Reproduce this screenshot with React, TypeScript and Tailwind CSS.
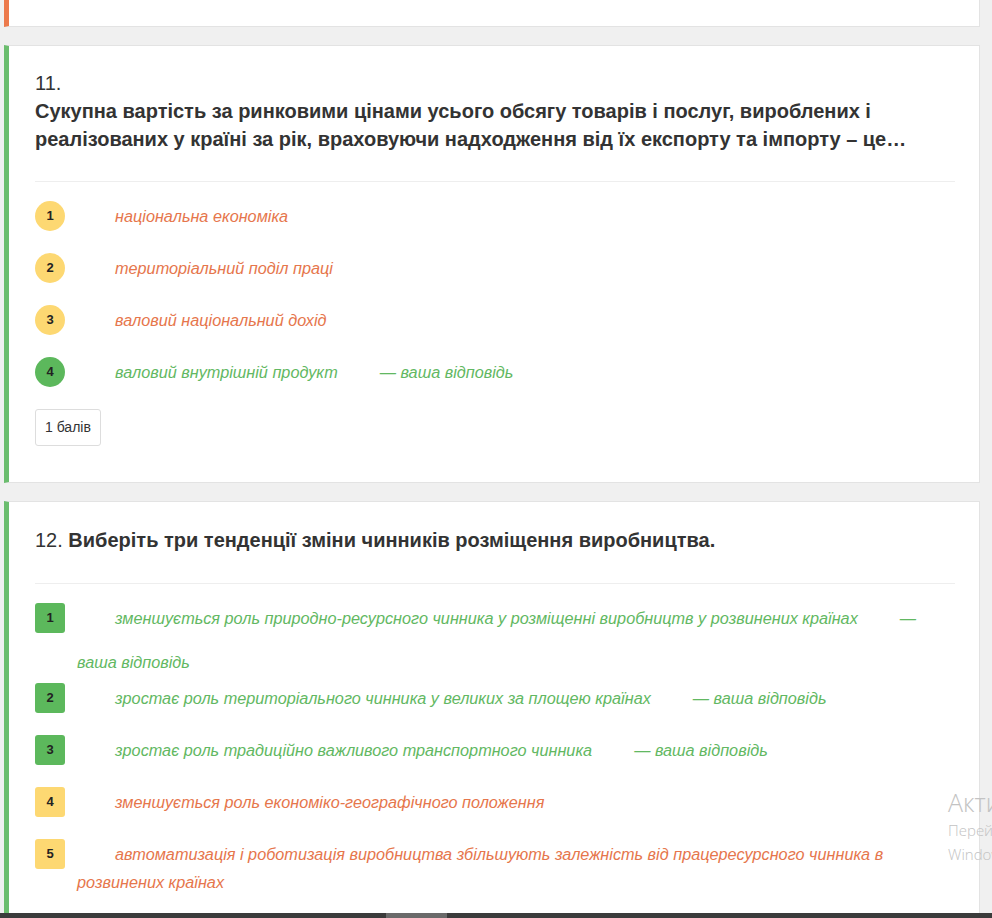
type Option = {
  n: number;
  lines: string[];
  correct: boolean;
  mine?: boolean;
  mineBreak?: boolean;
};

const q11: Option[] = [
  { n: 1, lines: ['національна економіка'], correct: false },
  { n: 2, lines: ['територіальний поділ праці'], correct: false },
  { n: 3, lines: ['валовий національний дохід'], correct: false },
  { n: 4, lines: ['валовий внутрішній продукт'], correct: true, mine: true },
];

const q12: Option[] = [
  {
    n: 1,
    lines: ['зменшується роль природно-ресурсного чинника у розміщенні виробництв у розвинених країнах'],
    correct: true,
    mine: true,
    mineBreak: true,
  },
  { n: 2, lines: ['зростає роль територіального чинника у великих за площею країнах'], correct: true, mine: true },
  { n: 3, lines: ['зростає роль традиційно важливого транспортного чинника'], correct: true, mine: true },
  { n: 4, lines: ['зменшується роль економіко-географічного положення'], correct: false },
  {
    n: 5,
    lines: ['автоматизація і роботизація виробництва збільшують залежність від працересурсного чинника в', 'розвинених країнах'],
    correct: false,
  },
];

function Badge({ n, correct, round }: { n: number; correct: boolean; round: boolean }) {
  return (
    <span
      className={`flex h-[30px] w-[30px] shrink-0 items-center justify-center text-[13px] font-bold not-italic text-[#222] ${
        round ? 'rounded-full' : 'rounded-[3px]'
      } ${correct ? 'bg-[#5cb85c]' : 'bg-[#fdd872]'}`}
    >
      {n}
    </span>
  );
}

function OptionRow({ o, round }: { o: Option; round: boolean }) {
  const color = o.correct ? 'text-[#62b862]' : 'text-[#e6764c]';
  const extra = o.mineBreak || o.lines.length > 1;
  return (
    <div className={`italic text-[16.25px] ${color} ${extra ? 'mb-[7px]' : 'mb-[22px]'}`}>
      <div className="flex h-[30px] items-center">
        <Badge n={o.n} correct={o.correct} round={round} />
        <span className="ml-[50px] whitespace-nowrap">{o.lines[0]}</span>
        {o.mine && <span className="ml-[42px] whitespace-nowrap">{o.mineBreak ? '—' : '— ваша відповідь'}</span>}
      </div>
      {o.mineBreak && <div className="mt-[15px] pl-[42px] leading-[28px]">ваша відповідь</div>}
      {o.lines.length > 1 && <div className="-mt-px pl-[42px] leading-[28px]">{o.lines[1]}</div>}
    </div>
  );
}

export default function App() {
  return (
    <div
      className="relative h-[918px] w-full overflow-hidden bg-[#f0f0f0] text-[#333]"
      style={{ fontFamily: '"Liberation Sans", Arial, sans-serif' }}
    >
      <div className="flex flex-col gap-[18px] pl-[4px] pr-[12px]">
        <div className="h-[27px] border-b border-r border-[#e3e3e3] border-l-[5px] border-l-[#ec7a4c] bg-white" />

        <section className="h-[438px] border border-[#e3e3e3] border-l-[5px] border-l-[#6bbd6e] bg-white pl-[26px] pr-[24px] pt-[23px]">
          <div className="text-[20px] leading-[28px]">11.</div>
          <h2 className="text-[20px] font-bold leading-[28px]">
            Сукупна вартість за ринковими цінами усього обсягу товарів і послуг, вироблених і реалізованих у країні за
            рік, враховуючи надходження від їх експорту та імпорту – це…
          </h2>
          <hr className="mt-[28px] mb-[19px] border-t border-[#eee]" />
          {q11.map((o) => (
            <OptionRow key={o.n} o={o} round />
          ))}
          <div className="inline-flex h-[37px] items-center rounded-[3px] border border-[#ddd] px-[9px] text-[14px]">
            1 балів
          </div>
        </section>

        <section className="h-[420px] border border-[#e3e3e3] border-l-[5px] border-l-[#6bbd6e] bg-white pl-[26px] pr-[24px] pt-[24px]">
          <div className="text-[20px] leading-[28px]">
            12. <span className="font-bold">Виберіть три тенденції зміни чинників розміщення виробництва.</span>
          </div>
          <hr className="mt-[29px] mb-[19px] border-t border-[#eee]" />
          {q12.map((o) => (
            <OptionRow key={o.n} o={o} round={false} />
          ))}
        </section>
      </div>

      <div className="absolute bottom-0 left-0 flex h-[5px] w-full bg-[#3b3b3b]">
        <div className="ml-[386px] h-full w-[61px] bg-[#6a6a6a]" />
      </div>

      <div
        className="pointer-events-none absolute left-[948px] top-[786px] whitespace-nowrap font-light text-[#c3c3c3]"
        style={{ fontFamily: '"Open Sans", sans-serif' }}
      >
        <div className="text-[25px] leading-[32px]">Активация Windows</div>
        <div className="text-[15px] leading-[24px]">Перейдите в раздел «Параметры»,</div>
        <div className="text-[15px] leading-[24px]">Windows.</div>
      </div>
    </div>
  );
}
